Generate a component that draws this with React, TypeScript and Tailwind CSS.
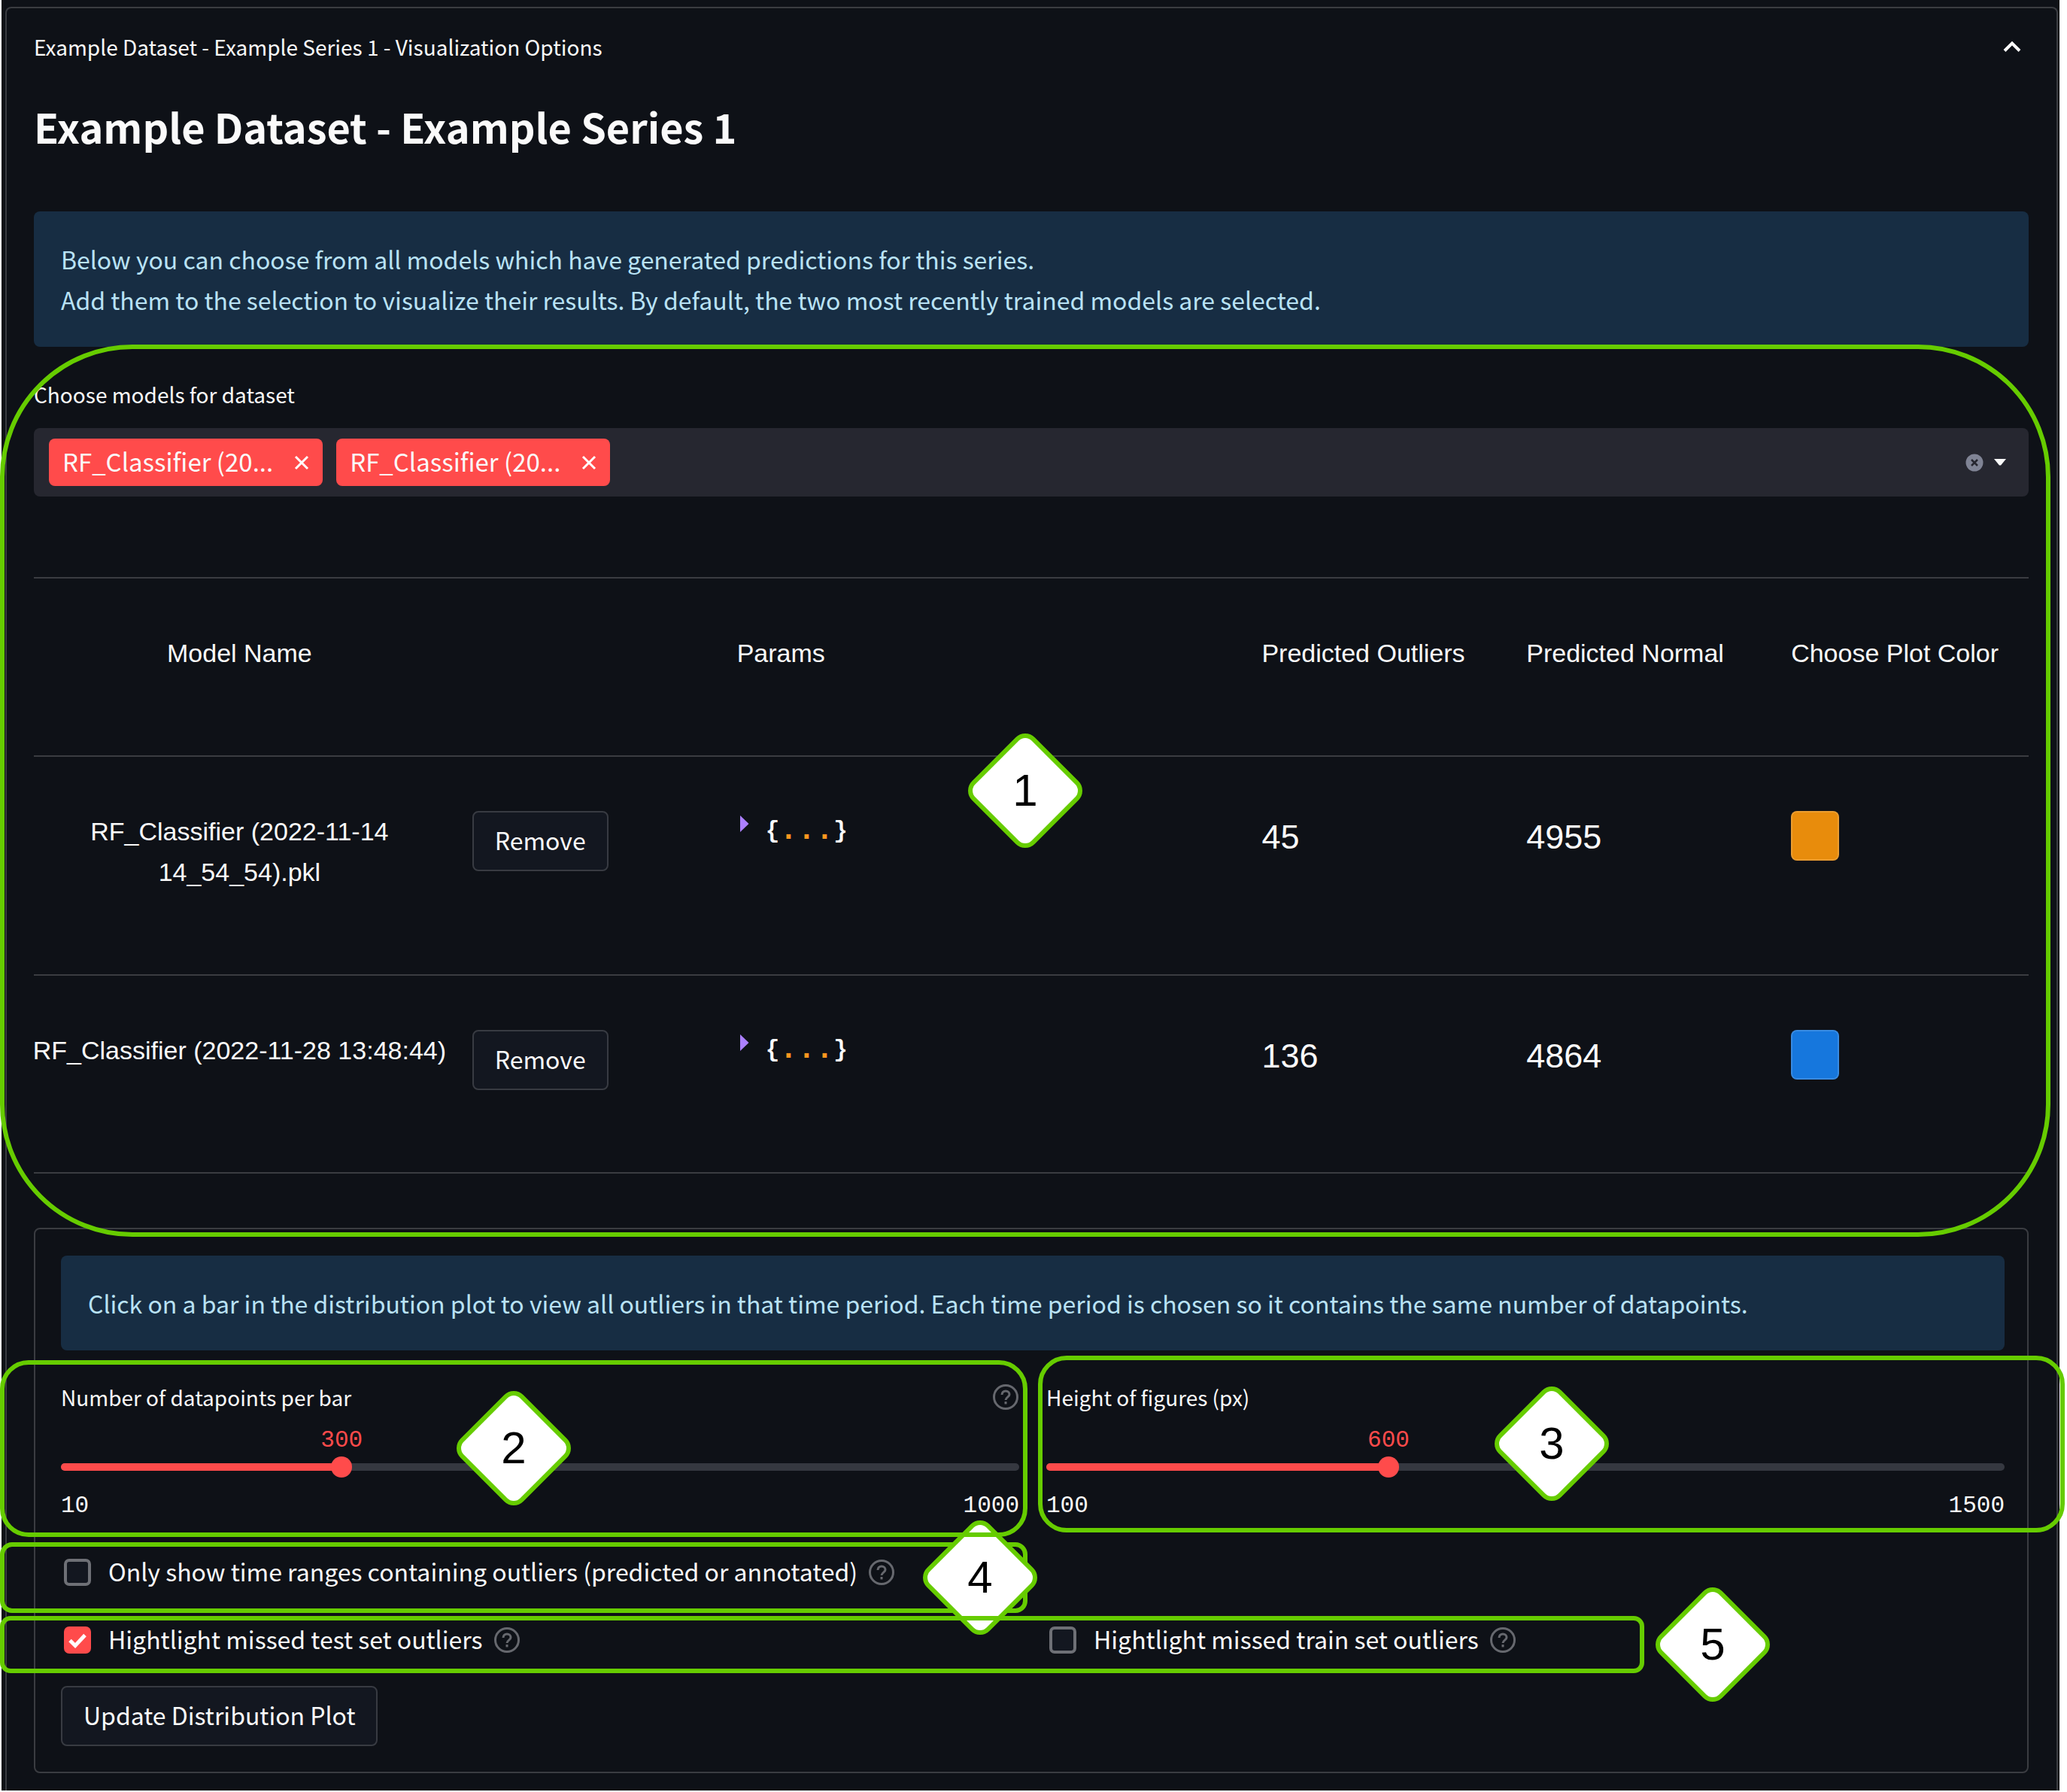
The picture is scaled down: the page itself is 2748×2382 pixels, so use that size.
import { useId, useState } from "react";
import type { ReactNode } from "react";

function HelpIcon() {
  return (
    <svg viewBox="0 0 36 36" className="size-9 shrink-0" fill="none" stroke="#66686e" strokeWidth="3" role="img" aria-label="Help">
      <circle cx="18" cy="18" r="15.5" />
      <path d="M13 15c0-3 2-5 5-5s5 2 5 4.600c0 3.400-5 3.600-5 7.400" />
      <path d="M18 24v3.400" />
    </svg>
  );
}

function Marker({ n, className }: { n: number; className: string }) {
  return (
    <div className={`pointer-events-none absolute flex size-[118px] items-center justify-center ${className}`}>
      <div className="absolute inset-0 rotate-45 rounded-[18px] border-[6px] border-[#66cc00] bg-white" />
      <span className="relative font-['Liberation_Sans',Arial,sans-serif] text-[60px] leading-none text-black">{n}</span>
    </div>
  );
}

function Outline({ className }: { className: string }) {
  return <div className={`pointer-events-none absolute border-[6px] border-[#66cc00] ${className}`} />;
}

function Info({ children }: { children: ReactNode }) {
  return <div className="rounded-lg bg-[#172d43] px-9 py-9 text-[32px] leading-[54px] text-[#b9e2f5]">{children}</div>;
}

function ActionButton({ children }: { children: ReactNode }) {
  return (
    <button type="button" className="h-20 rounded-lg border-2 border-[#383b42] bg-[#131720] px-7 pb-1 text-[32px] leading-[54px]">
      {children}
    </button>
  );
}

function Chip({ text, onRemove }: { text: string; onRemove: () => void }) {
  return (
    <span className="flex h-[63px] items-center rounded-lg bg-[#ff4b4b] px-[18px] pb-1 text-[33px] leading-[54px]">
      {text}
      <button type="button" onClick={onRemove} aria-label={`Remove ${text}`} className="ml-7 pt-1">
        <svg viewBox="0 0 20 20" className="size-5" fill="none" stroke="#fff" strokeWidth="3">
          <path d="M2 2l16 16M18 2L2 18" />
        </svg>
      </button>
    </span>
  );
}

const GRID = "grid grid-cols-[547fr_316fr_662fr_316fr_316fr_316fr] gap-x-9 border-t-2 border-[#3a3c41] pt-18 pb-[109px]";

const MODELS = [
  { name: "RF_Classifier (2022-11-14 14_54_54).pkl", outliers: 45, normal: 4955, color: "#e88c0c" },
  { name: "RF_Classifier (2022-11-28 13:48:44)", outliers: 136, normal: 4864, color: "#1677dd" },
];

function ModelRow({ model }: { model: (typeof MODELS)[number] }) {
  const [color, setColor] = useState(model.color);
  return (
    <tr className={GRID}>
      <td className="-mx-2 text-center">{model.name}</td>
      <td className="font-['Noto_Sans_CJK_SC',sans-serif]">
        <ActionButton>Remove</ActionButton>
      </td>
      <td>
        <button type="button" aria-label="Expand params" className="flex h-[54px] items-center font-['Liberation_Mono',monospace]">
          <svg viewBox="0 0 12 22" className="mt-1.5 ml-1 h-[22px] w-3 self-start" fill="#ac80ff">
            <path d="M0 0l11.500 11L0 22z" />
          </svg>
          <span className="ml-[22px] text-[31px] font-bold">{"{"}</span>
          <span className="text-[40px] font-bold text-[#fd971f]">...</span>
          <span className="text-[31px] font-bold">{"}"}</span>
        </button>
      </td>
      <td className="text-[45px] leading-[70px]">{model.outliers}</td>
      <td className="text-[45px] leading-[70px]">{model.normal}</td>
      <td>
        <input
          type="color"
          aria-label={`Plot color of ${model.name}`}
          value={color}
          onChange={(e) => setColor(e.target.value)}
          className="block h-[66px] w-16 appearance-none overflow-hidden rounded-lg border-2 border-white/15 bg-clip-border [&::-webkit-color-swatch]:border-0 [&::-webkit-color-swatch-wrapper]:p-0"
          style={{ backgroundColor: color }}
        />
      </td>
    </tr>
  );
}

function Slider({ label, min, max, initial, help, children }: { label: string; min: number; max: number; initial: number; help?: boolean; children?: ReactNode }) {
  const id = useId();
  const [value, setValue] = useState(initial);
  const percent = ((value - min) / (max - min)) * 100;
  return (
    <div className="relative min-w-0 flex-1">
      <div className="flex h-[54px] items-center justify-between">
        <label htmlFor={id} className="text-[28px] leading-[54px]">{label}</label>
        {help && <HelpIcon />}
      </div>
      <div className="relative mt-[13px] h-9 font-['Liberation_Mono',monospace] text-[31px] leading-9 text-[#ff4b4b]">
        <output htmlFor={id} className="absolute -translate-x-1/2" style={{ left: `${percent}%` }}>{value}</output>
      </div>
      <div className="relative mt-[3px] flex h-7 items-center">
        <div className="h-2.5 w-full overflow-hidden rounded-[5px] bg-[#353840]">
          <div className="h-full bg-[#ff4b4b]" style={{ width: `${percent}%` }} />
        </div>
        <input
          id={id}
          type="range"
          min={min}
          max={max}
          value={value}
          onChange={(e) => setValue(Number(e.target.value))}
          className="absolute inset-y-0 -left-3.5 w-[calc(100%+28px)] appearance-none bg-transparent [&::-webkit-slider-thumb]:size-7 [&::-webkit-slider-thumb]:appearance-none [&::-webkit-slider-thumb]:rounded-full [&::-webkit-slider-thumb]:bg-[#ff4b4b]"
        />
      </div>
      <div className="mt-[13px] flex justify-between font-['Liberation_Mono',monospace] text-[31px] leading-[50px]">
        <span>{min}</span>
        <span>{max}</span>
      </div>
      {children}
    </div>
  );
}

function Check({ label, initial = false, children }: { label: string; initial?: boolean; children?: ReactNode }) {
  const [checked, setChecked] = useState(initial);
  return (
    <div className="relative flex h-[54px] min-w-0 flex-1 items-center gap-3.5">
      <label className="flex items-center gap-[23px] pl-1 text-[32px] leading-[50px]">
        <span className="relative size-9 shrink-0">
          <input
            type="checkbox"
            checked={checked}
            onChange={(e) => setChecked(e.target.checked)}
            className="block size-9 appearance-none rounded-[7px] border-4 border-[#6e7076] bg-[#131720] checked:border-[#ff4b4b] checked:bg-[#ff4b4b]"
          />
          {checked && (
            <svg viewBox="0 0 36 36" className="pointer-events-none absolute inset-0" fill="none" stroke="#fff" strokeWidth="5">
              <path d="M8 18.500l7 7L28 11.500" />
            </svg>
          )}
        </span>
        <span className="pb-1">{label}</span>
      </label>
      <HelpIcon />
      {children}
    </div>
  );
}

export default function App() {
  const [open, setOpen] = useState(true);
  const [chips, setChips] = useState(["a", "b"]);
  return (
    <div className="overflow-x-hidden bg-white pr-[10px] pl-[2px] font-['Noto_Sans_CJK_SC',sans-serif] text-[#fafafa]">
      <div className="bg-[#0e1117] pt-[9px] pr-[2px] pl-[5px]">
        <section className="rounded-t-lg border-2 border-b-0 border-[#3a3c41] pr-[37px] pb-[23px] pl-9">
          <button type="button" onClick={() => setOpen(!open)} aria-expanded={open} className="flex h-[102px] w-full items-center justify-between text-[28px] leading-[54px]">
            Example Dataset - Example Series 1 - Visualization Options
            <svg viewBox="0 0 24 16" className="mr-2.5 h-4 w-6" fill="none" stroke="#fafafa" strokeWidth="4">
              <path d="M2 13.500L12 3.500l10 10" />
            </svg>
          </button>
          {open && (
            <>
              <h1 className="mt-[19px] text-[54px] leading-[72px] font-bold">Example Dataset - Example Series 1</h1>
              <div className="mt-[77px]">
                <Info>
                  Below you can choose from all models which have generated predictions for this series.
                  <br />
                  Add them to the selection to visualize their results. By default, the two most recently trained models are selected.
                </Info>
              </div>

              <div className="relative mt-9">
                <label htmlFor="models" className="block text-[28px] leading-[54px]">Choose models for dataset</label>
                <div className="mt-[18px] flex h-[91px] items-center gap-[18px] rounded-lg bg-[#262730] px-5">
                  {chips.map((c) => (
                    <Chip key={c} text="RF_Classifier (20..." onRemove={() => setChips(chips.filter((x) => x !== c))} />
                  ))}
                  <input id="models" role="combobox" aria-expanded="false" aria-controls="models" className="min-w-0 flex-1 bg-transparent text-[32px] outline-none" />
                  <button type="button" aria-label="Clear all" onClick={() => setChips([])}>
                    <svg viewBox="0 0 24 24" className="size-6">
                      <circle cx="12" cy="12" r="11.500" fill="#808495" />
                      <path d="M8 8l8 8M16 8l-8 8" stroke="#262730" strokeWidth="2.500" />
                    </svg>
                  </button>
                  <button type="button" aria-label="Open" className="mr-2.5 -ml-1">
                    <svg viewBox="0 0 16 9" className="h-[9px] w-4" fill="#fafafa">
                      <path d="M0 0h16l-7 8.500h-2z" />
                    </svg>
                  </button>
                </div>

                <table className="mt-[107px] block border-b-2 border-[#3a3c41] font-['Liberation_Sans',Arial,sans-serif] text-[34px] leading-[54px]">
                  <thead className="block">
                    <tr className={GRID}>
                      <th scope="col" className="text-center font-normal">Model Name</th>
                      <td />
                      <th scope="col" className="text-left font-normal">Params</th>
                      <th scope="col" className="text-left font-normal">Predicted Outliers</th>
                      <th scope="col" className="text-left font-normal">Predicted Normal</th>
                      <th scope="col" className="text-left font-normal">Choose Plot Color</th>
                    </tr>
                  </thead>
                  <tbody className="block">
                    {MODELS.map((m) => (
                      <ModelRow key={m.name} model={m} />
                    ))}
                  </tbody>
                </table>
                <Outline className="-top-[39px] -right-[29px] -bottom-[84px] -left-[45px] z-20 rounded-[176px]" />
                <Marker n={1} className="top-[495px] left-[1259px] z-20" />
              </div>

              <form onSubmit={(e) => e.preventDefault()} className="mt-18 rounded-lg border-2 border-[#3a3c41] pt-[35px] pr-[30px] pb-[34px] pl-[34px]">
                <Info>Click on a bar in the distribution plot to view all outliers in that time period. Each time period is chosen so it contains the same number of datapoints.</Info>
                <div className="mt-[35px] flex gap-9">
                  <Slider label="Number of datapoints per bar" min={10} max={1000} initial={300} help>
                    <Outline className="-top-[22px] -right-[11px] -bottom-4 -left-[81px] z-20 rounded-[38px]" />
                    <Marker n={2} className="top-9 left-[543px] z-20" />
                  </Slider>
                  <Slider label="Height of figures (px)" min={100} max={1500} initial={600}>
                    <Outline className="-top-7 -right-20 -bottom-2.5 -left-[11px] z-20 rounded-[38px]" />
                    <Marker n={3} className="top-[30px] left-[613px] z-20" />
                  </Slider>
                </div>
                <div className="mt-9 flex gap-9">
                  <Check label="Only show time ranges containing outliers (predicted or annotated)">
                    <Outline className="-top-[13px] -right-[11px] -bottom-[27px] -left-[81px] z-10 rounded-2xl" />
                    <Marker n={4} className="-top-[25px] left-[1163px] z-10" />
                  </Check>
                  <div className="flex-1" />
                </div>
                <div className="relative mt-9 flex gap-9">
                  <Check label="Hightlight missed test set outliers" initial />
                  <Check label="Hightlight missed train set outliers" />
                  <Outline className="-top-[5px] right-[479px] -bottom-[17px] -left-[81px] z-20 rounded-[14px]" />
                  <Marker n={5} className="-top-[26px] right-[329px] z-20" />
                </div>
                <div className="mt-[34px] flex">
                  <ActionButton>Update Distribution Plot</ActionButton>
                </div>
              </form>
            </>
          )}
        </section>
      </div>
    </div>
  );
}
